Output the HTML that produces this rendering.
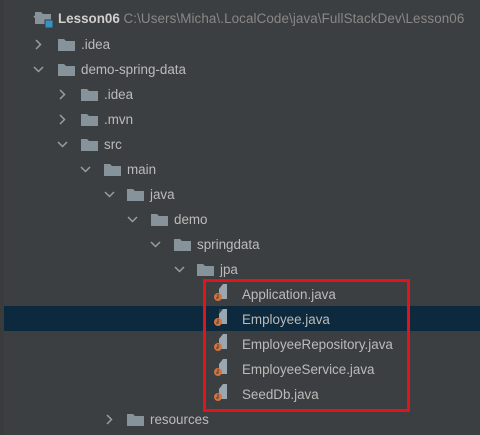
<!DOCTYPE html><html><head><style>
body{margin:0;width:480px;height:435px;background:#3c3f41;overflow:hidden;position:relative;font-family:"Liberation Sans",sans-serif;font-size:13.4px;color:#bbbbbb}
.r{position:absolute;left:0;width:480px;height:25px}
.t{position:absolute;top:4px;line-height:17px;white-space:nowrap}
.ar{position:absolute;top:7px;width:11px;height:11px}
.f{position:absolute;top:6px;width:17px;height:13px}
.sel{background:#0d293e;left:4px}
</style></head><body>
<div style="position:absolute;left:0;top:0;width:4px;height:435px;background:#393b3d"></div>
<div class="r sel" style="top:306px;width:476px"></div>
<svg width="0" height="0" style="position:absolute"><defs>
<g id="dn"><path d="M1 3 L5.5 7.5 L10 3" stroke="#9a9da0" stroke-width="1.5" fill="none"/></g>
<g id="rt"><path d="M3 1 L7.5 5.5 L3 10" stroke="#9a9da0" stroke-width="1.5" fill="none"/></g>
<g id="fo"><path d="M0 1 H6 L8 3 H17 V13 H0 Z" fill="#87939a"/></g>
<g id="jv"><path d="M5 0 H13 V15 H5 Z" fill="#9aa7b0"/><path d="M5 0 L9 0 L5 5 Z" fill="#3c3f41"/><circle cx="4" cy="13" r="4" fill="#d3733c"/><path d="M4 10 V14 H2" stroke="#3c3f41" stroke-width="1" fill="none"/></g>
</defs></svg>
<div class="r" style="top:6px"><svg class="ar" style="left:33px"><use href="#dn"/></svg>
<svg style="position:absolute;left:35px;top:5px" width="20" height="17"><path d="M0 1 H6 L8 3 H16 V13 H0 Z" fill="#87939a"/><rect x="10" y="9" width="8" height="8" fill="#3592c4" stroke="#3c3f41" stroke-width="1"/></svg>
<span class="t" style="left:58px"><b style="color:#cfcfcf">Lesson06</b> <span style="color:#888;letter-spacing:0.1px">C:\Users\Micha\.LocalCode\java\FullStackDev\Lesson06</span></span></div>

<div class="r" style="top:32px"><svg class="ar" style="left:33px"><use href="#rt"/></svg><svg class="f" style="left:58px"><use href="#fo"/></svg><span class="t" style="left:81px">.idea</span></div>
<div class="r" style="top:57px"><svg class="ar" style="left:33px"><use href="#dn"/></svg><svg class="f" style="left:58px"><use href="#fo"/></svg><span class="t" style="left:81px">demo-spring-data</span></div>
<div class="r" style="top:82px"><svg class="ar" style="left:57px"><use href="#rt"/></svg><svg class="f" style="left:81px"><use href="#fo"/></svg><span class="t" style="left:104px">.idea</span></div>
<div class="r" style="top:107px"><svg class="ar" style="left:57px"><use href="#rt"/></svg><svg class="f" style="left:81px"><use href="#fo"/></svg><span class="t" style="left:104px">.mvn</span></div>
<div class="r" style="top:132px"><svg class="ar" style="left:57px"><use href="#dn"/></svg><svg class="f" style="left:81px"><use href="#fo"/></svg><span class="t" style="left:104px">src</span></div>
<div class="r" style="top:157px"><svg class="ar" style="left:80px"><use href="#dn"/></svg><svg class="f" style="left:104px"><use href="#fo"/></svg><span class="t" style="left:127px">main</span></div>
<div class="r" style="top:182px"><svg class="ar" style="left:104px"><use href="#dn"/></svg><svg class="f" style="left:127px"><use href="#fo"/></svg><span class="t" style="left:150px">java</span></div>
<div class="r" style="top:207px"><svg class="ar" style="left:127px"><use href="#dn"/></svg><svg class="f" style="left:151px"><use href="#fo"/></svg><span class="t" style="left:174px">demo</span></div>
<div class="r" style="top:232px"><svg class="ar" style="left:150px"><use href="#dn"/></svg><svg class="f" style="left:174px"><use href="#fo"/></svg><span class="t" style="left:197px">springdata</span></div>
<div class="r" style="top:257px"><svg class="ar" style="left:174px"><use href="#dn"/></svg><svg class="f" style="left:197px"><use href="#fo"/></svg><span class="t" style="left:220px">jpa</span></div>

<div class="r" style="top:282px"><svg style="position:absolute;left:214px;top:2px" width="17" height="19"><use href="#jv"/></svg><span class="t" style="left:242px">Application.java</span></div>
<div class="r" style="top:307px"><svg style="position:absolute;left:214px;top:2px" width="17" height="19"><use href="#jv"/></svg><span class="t" style="left:242px">Employee.java</span></div>
<div class="r" style="top:332px"><svg style="position:absolute;left:214px;top:2px" width="17" height="19"><use href="#jv"/></svg><span class="t" style="left:242px">EmployeeRepository.java</span></div>
<div class="r" style="top:357px"><svg style="position:absolute;left:214px;top:2px" width="17" height="19"><use href="#jv"/></svg><span class="t" style="left:242px">EmployeeService.java</span></div>
<div class="r" style="top:382px"><svg style="position:absolute;left:214px;top:2px" width="17" height="19"><use href="#jv"/></svg><span class="t" style="left:242px">SeedDb.java</span></div>
<div class="r" style="top:407px"><svg class="ar" style="left:104px"><use href="#rt"/></svg><svg class="f" style="left:127px"><use href="#fo"/></svg><span class="t" style="left:150px">resources</span></div>

<div style="position:absolute;left:203px;top:279px;width:201px;height:127px;border:3px solid #e0141b"></div>
</body></html>
